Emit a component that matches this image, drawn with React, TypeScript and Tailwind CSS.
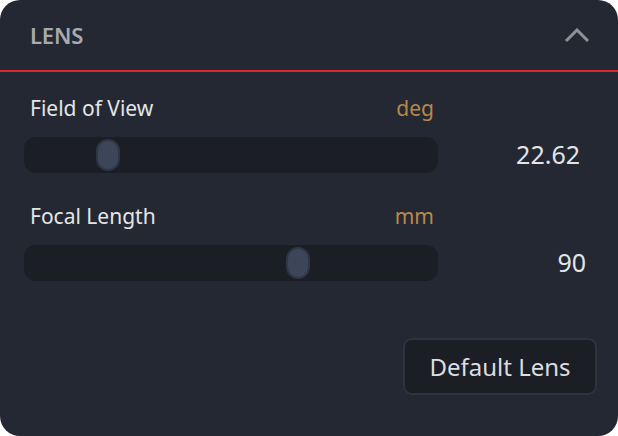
import React from 'react';

type Param = {
  label: string;
  unit: string;
  value: string;
  fraction: number;
  valueClass: string;
};

const TRACK_WIDTH = 414;
const THUMB_WIDTH = 24;

const params: Param[] = [
  { label: 'Field of View', unit: 'deg', value: '22.62', fraction: 0.1846, valueClass: 'pr-[38px]' },
  { label: 'Focal Length', unit: 'mm', value: '90', fraction: 0.6718, valueClass: 'pr-[32px]' },
];

function ChevronUp() {
  return (
    <svg width="26" height="15" viewBox="0 0 26 15" fill="none">
      <path d="M2 13 L13 2 L24 13" stroke="#8f9197" strokeWidth="3" strokeLinejoin="miter" />
    </svg>
  );
}

function SliderRow({ param }: { param: Param }) {
  const left = param.fraction * (TRACK_WIDTH - THUMB_WIDTH);

  return (
    <div className="grid grid-cols-[414px_1fr]">
      <div>
        <div className="flex h-[28px] items-center justify-between pl-[6px] pr-[4px] text-[21px] leading-[28px]">
          <span className="text-[#e4e5e7]">{param.label}</span>
          <span className="text-[#b8894a]">{param.unit}</span>
        </div>
        <div className="relative mt-[15px] h-[36px] rounded-[12px] bg-[#1b1e25]">
          <div
            className="absolute top-[2px] h-[32px] w-[24px] rounded-full border-2 border-[#2f3644] bg-[#3d4658]"
            style={{ left }}
          />
        </div>
      </div>
      <div
        className={`self-end pb-[1px] text-right text-[25px] leading-[36px] text-[#e2e4e8] ${param.valueClass}`}
      >
        {param.value}
      </div>
    </div>
  );
}

export default function App() {
  return (
    <div className="h-[436px] w-[618px] bg-white font-['Noto_Sans',sans-serif]">
      <div className="flex h-full flex-col overflow-hidden rounded-[20px] bg-[#232833]">
        <div className="flex h-[70px] items-center justify-between pl-[30px] pr-[28px]">
          <span className="text-[22px] font-semibold tracking-[-0.2px] text-[#a9aaad]">LENS</span>
          <ChevronUp />
        </div>
        <div className="h-[2px] bg-[#e0262a]" />

        <div className="flex flex-col gap-[29px] pl-[24px] pt-[22px]">
          {params.map((p) => (
            <SliderRow key={p.label} param={p} />
          ))}
        </div>

        <div className="mt-[57px] flex justify-end pr-[21px]">
          <button className="flex h-[57px] w-[194px] items-center justify-center rounded-[9px] border-2 border-[#2e333d] bg-[#1b1e25] text-[24px] text-[#dcdde0]">
            Default Lens
          </button>
        </div>
      </div>
    </div>
  );
}
